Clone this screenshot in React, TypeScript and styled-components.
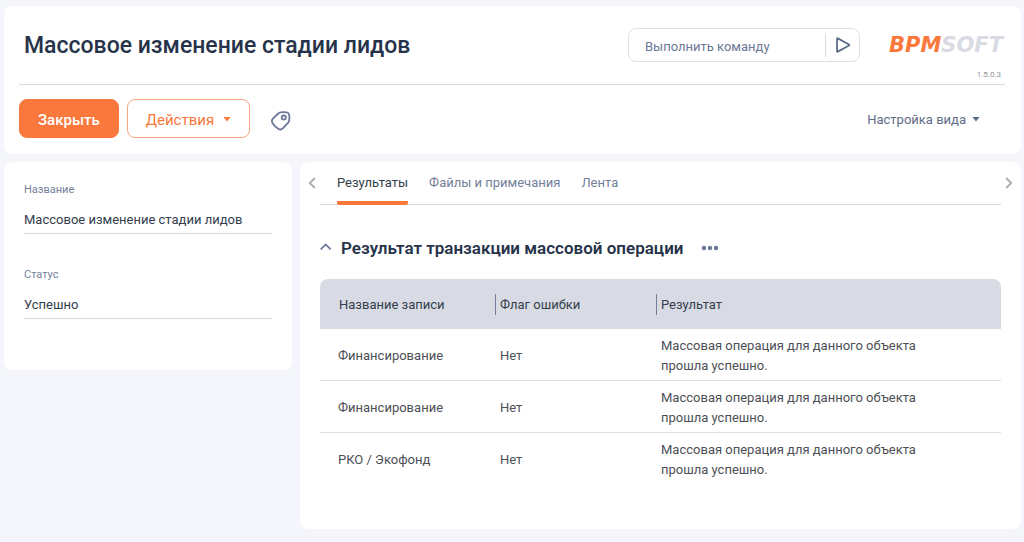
import React from "react";
import styled, { createGlobalStyle } from "styled-components";

const GlobalStyle = createGlobalStyle`
  *, *::before, *::after { box-sizing: border-box; }
  body {
    margin: 0;
    background: #f5f6fb;
    color: #444c59;
    font-family: Roboto, "Noto Sans", sans-serif;
    font-size: 13px;
    line-height: 20px;
  }
  button, input { font: inherit; color: inherit; }
  button { border: 0; padding: 0; background: none; cursor: pointer; }
  h1, h2 { margin: 0; }
`;

const Page = styled.div`
  display: flex;
  flex-direction: column;
  gap: 8px;
  padding: 6px 3px 12px 4px;
`;

const Card = styled.section`
  background: #fff;
  border-radius: 8px;
`;

const Header = styled(Card).attrs({ as: "header" })`
  padding: 0 16px 0 15px;
`;

const HeaderTop = styled.div`
  display: flex;
  align-items: flex-start;
  height: 79px;
  border-bottom: 1px solid #d8dbe5;
`;

const Title = styled.h1`
  flex: 1;
  padding: 24px 0 0 5px;
  color: #26334a;
  font-size: 23px;
  line-height: 32px;
  font-weight: 500;
`;

const CommandBox = styled.form`
  display: flex;
  align-items: center;
  width: 232px;
  height: 34px;
  margin: 22px 26px 0 0;
  border: 1px solid #dfe1ea;
  border-radius: 8px;
`;

const CommandInput = styled.input`
  flex: 1;
  min-width: 0;
  padding: 3px 0 0 16px;
  border: 0;
  outline: 0;
  background: transparent;
  &::placeholder { color: #6b7896; opacity: 1; }
`;

const RunButton = styled.button`
  display: flex;
  align-items: center;
  justify-content: center;
  width: 34px;
  height: 24px;
  border-left: 1px solid #d8dbe5;
`;

const Brand = styled.div`
  display: flex;
  flex-direction: column;
  align-items: flex-end;
  width: 119px;
  padding-top: 27px;
`;

const Logo = styled.div`
  padding-right: 2px;
  color: #d8dbe2;
  font-family: "DejaVu Sans", sans-serif;
  font-size: 21px;
  line-height: 24px;
  font-weight: 700;
  font-style: italic;
`;

const LogoAccent = styled.span`
  color: #fb783c;
`;

const Version = styled.span`
  padding: 12px 4px 0 0;
  color: #8f939c;
  font-size: 8px;
  line-height: 12px;
`;

const Toolbar = styled.div`
  display: flex;
  align-items: center;
  gap: 8px;
  padding: 14px 0 16px;
`;

const ActionButton = styled.button<{ $primary?: boolean }>`
  display: flex;
  align-items: center;
  gap: 9px;
  height: 39px;
  padding: 2px 18px 0;
  border: 1px solid ${(p) => (p.$primary ? "#fb783c" : "#fca582")};
  border-radius: 8px;
  background: ${(p) => (p.$primary ? "#fb783c" : "#fff")};
  color: ${(p) => (p.$primary ? "#fff" : "#fb783c")};
  font-size: 15px;
  font-weight: ${(p) => (p.$primary ? 500 : 400)};
`;

const TagButton = styled.button`
  display: flex;
  margin: 4px auto 0 12px;
`;

const ViewButton = styled.button`
  display: flex;
  align-items: center;
  gap: 6px;
  padding: 2px 25px 0 0;
  color: #5f6c88;
`;

const Columns = styled.main`
  display: grid;
  grid-template-columns: 288px minmax(0, 1fr);
  gap: 8px;
  align-items: start;
`;

const Profile = styled(Card)`
  display: flex;
  flex-direction: column;
  gap: 31px;
  padding: 18px 20px 51px;
`;

const Field = styled.label`
  display: flex;
  flex-direction: column;
  gap: 6px;
`;

const FieldLabel = styled.span`
  color: #74809a;
  font-size: 11px;
`;

const FieldInput = styled.input`
  width: 100%;
  height: 28px;
  padding: 0;
  border: 0;
  border-bottom: 1px solid #d8dbe2;
  outline: 0;
  color: #333d4d;
`;

const Content = styled(Card)`
  padding: 0 20px 45px;
`;

const TabBar = styled.div`
  display: flex;
  align-items: center;
  height: 42px;
  margin: 0 -12px;
`;

const TabList = styled.div`
  display: flex;
  flex: 1;
  gap: 21px;
  height: 43px;
  margin: 1px 4px 0 4px;
  padding-left: 17px;
  border-bottom: 1px solid #d8dbe2;
`;

const Tab = styled.button<{ $active?: boolean }>`
  height: 43px;
  padding-top: 2px;
  border-bottom: 4px solid ${(p) => (p.$active ? "#fb783c" : "transparent")};
  border-radius: 2px;
  color: ${(p) => (p.$active ? "#333d4d" : "#74809a")};
`;

const ScrollButton = styled.button`
  display: flex;
  width: 8px;
`;

const SectionHead = styled.div`
  display: flex;
  align-items: center;
  padding: 32px 0 19px;
`;

const CollapseButton = styled.button`
  display: flex;
  margin-right: 9px;
`;

const SectionTitle = styled.h2`
  color: #26334a;
  font-size: 17px;
  line-height: 24px;
  font-weight: 600;
`;

const MoreButton = styled.button`
  display: flex;
  margin-left: 18px;
`;

const Table = styled.table`
  width: 100%;
  border-collapse: separate;
  border-spacing: 0;
  table-layout: fixed;
`;

const HeadCell = styled.th`
  height: 50px;
  padding: 0;
  background: #d8dbe3;
  color: #333d4d;
  font-weight: 400;
  text-align: left;
  &:first-child { border-top-left-radius: 8px; width: 162px; }
  &:nth-child(2) { width: 161px; }
  &:last-child { border-top-right-radius: 8px; }
`;

const HeadLabel = styled.span<{ $first?: boolean }>`
  display: block;
  padding-top: 1px;
  padding-left: ${(p) => (p.$first ? "19px" : "4px")};
  margin-left: ${(p) => (p.$first ? "0" : "13px")};
  border-left: ${(p) => (p.$first ? "0" : "1px solid #74809a")};
`;

const Row = styled.tr`
  &:not(:last-child) td { border-bottom: 1px solid #dcdee3; }
`;

const Cell = styled.td`
  height: 51px;
  padding: 7px 0 4px 18px;
  color: #4c4f55;
  &:last-child { padding-right: 62px; }
`;

const Caret = () => (
  <svg width="8" height="5" viewBox="0 0 8 5" aria-hidden="true">
    <path d="M0.4 0h7.2L4 4.4z" fill="currentColor" />
  </svg>
);

const Chevron = ({ d, w, h, color }: { d: string; w: number; h: number; color: string }) => (
  <svg width={w} height={h} viewBox={`0 0 ${w} ${h}`} fill="none" stroke={color} strokeWidth="1.8" aria-hidden="true">
    <path d={d} />
  </svg>
);

const records = ["Финансирование", "Финансирование", "РКО / Экофонд"];

export default function App() {
  return (
    <Page>
      <GlobalStyle />
      <Header>
        <HeaderTop>
          <Title>Массовое изменение стадии лидов</Title>
          <CommandBox onSubmit={(e) => e.preventDefault()}>
            <CommandInput aria-label="Выполнить команду" placeholder="Выполнить команду" />
            <RunButton aria-label="Выполнить">
              <svg width="16" height="16" viewBox="0 0 16 16" fill="none" stroke="#5f6c8c" strokeWidth="1.8" strokeLinejoin="round">
                <path d="M2 1.8v12.4q0 .8.8.4L14 8.5q.7-.5 0-1L2.8 1.4q-.8-.4-.8.4z" />
              </svg>
            </RunButton>
          </CommandBox>
          <Brand>
            <Logo><LogoAccent>BPM</LogoAccent>SOFT</Logo>
            <Version>1.5.0.3</Version>
          </Brand>
        </HeaderTop>
        <Toolbar>
          <ActionButton $primary>Закрыть</ActionButton>
          <ActionButton>Действия <Caret /></ActionButton>
          <TagButton aria-label="Теги">
            <svg width="22" height="20" viewBox="0 0 22 20" fill="none" stroke="#6b7896" strokeWidth="1.8" strokeLinejoin="round">
              <path d="M10.4 1.4q3-.6 6.2-.1 2.2.3 2.6 2.5.5 3.2-.2 6.2-.2 1-1 1.8l-5.2 5.6q-2.2 2-4.6.3-3.4-2.2-5.6-5.5-1.6-2.5.3-4.6l5.4-5.1q.9-.9 2.1-1.1z" />
              <circle cx="13.8" cy="6.6" r="2.1" />
            </svg>
          </TagButton>
          <ViewButton>Настройка вида <Caret /></ViewButton>
        </Toolbar>
      </Header>
      <Columns>
        <Profile>
          <Field>
            <FieldLabel>Название</FieldLabel>
            <FieldInput defaultValue="Массовое изменение стадии лидов" />
          </Field>
          <Field>
            <FieldLabel>Статус</FieldLabel>
            <FieldInput defaultValue="Успешно" />
          </Field>
        </Profile>
        <Content>
          <TabBar>
            <ScrollButton aria-label="Назад">
              <Chevron w={8} h={12} color="#a9abb0" d="M6.8 1 1.8 6l5 5" />
            </ScrollButton>
            <TabList role="tablist">
              <Tab role="tab" aria-selected $active>Результаты</Tab>
              <Tab role="tab">Файлы и примечания</Tab>
              <Tab role="tab">Лента</Tab>
            </TabList>
            <ScrollButton aria-label="Вперёд">
              <Chevron w={8} h={12} color="#a9abb0" d="m1.2 1 5 5-5 5" />
            </ScrollButton>
          </TabBar>
          <SectionHead>
            <CollapseButton aria-label="Свернуть">
              <Chevron w={12} h={12} color="#6b7896" d="M.7 7.4 5.7 2.4l5 5" />
            </CollapseButton>
            <SectionTitle>Результат транзакции массовой операции</SectionTitle>
            <MoreButton aria-label="Ещё">
              <svg width="18" height="6" viewBox="0 0 18 6" fill="#6b7896">
                <circle cx="3" cy="3" r="2.2" />
                <circle cx="9" cy="3" r="2.2" />
                <circle cx="15" cy="3" r="2.2" />
              </svg>
            </MoreButton>
          </SectionHead>
          <Table>
            <thead>
              <tr>
                <HeadCell><HeadLabel $first>Название записи</HeadLabel></HeadCell>
                <HeadCell><HeadLabel>Флаг ошибки</HeadLabel></HeadCell>
                <HeadCell><HeadLabel>Результат</HeadLabel></HeadCell>
              </tr>
            </thead>
            <tbody>
              {records.map((name, i) => (
                <Row key={i}>
                  <Cell>{name}</Cell>
                  <Cell>Нет</Cell>
                  <Cell>Массовая операция для данного объекта прошла успешно.</Cell>
                </Row>
              ))}
            </tbody>
          </Table>
        </Content>
      </Columns>
    </Page>
  );
}
